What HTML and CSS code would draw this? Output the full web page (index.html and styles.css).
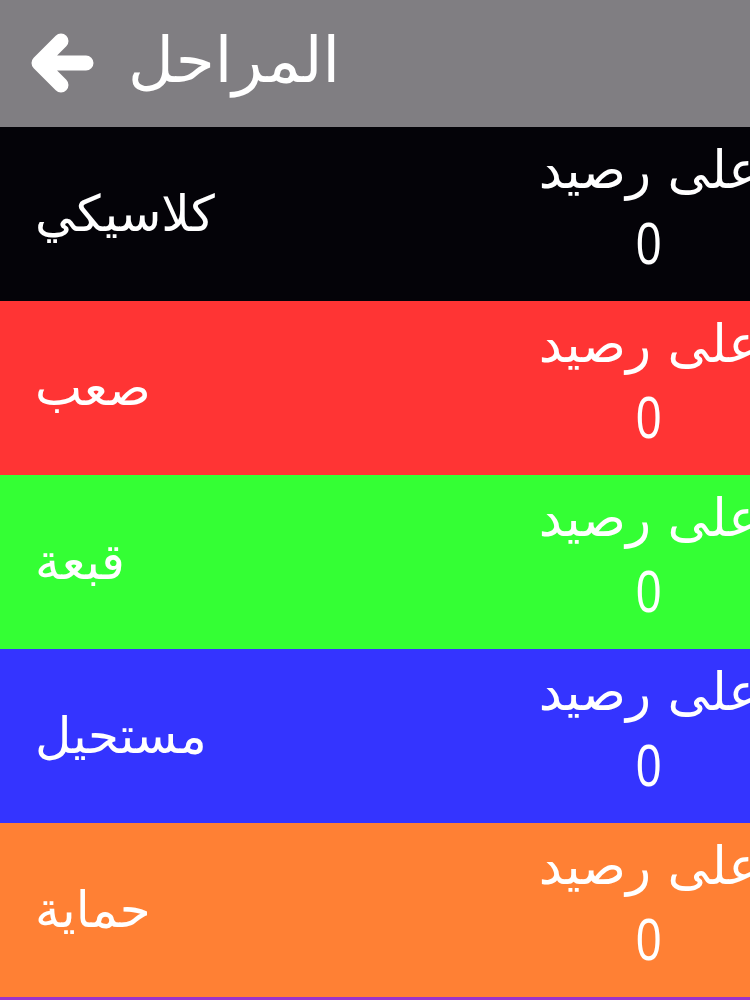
FILE: index.html
```html
<!DOCTYPE html>
<html lang="ar">
<head>
<meta charset="utf-8">
<title>المراحل</title>
<link rel="stylesheet" href="styles.css">
</head>
<body>
<header class="topbar">
  <svg class="back" width="66" height="66" viewBox="0 0 66 66" aria-hidden="true">
    <path d="M9 32 L56 32 M9 32 L31 10 M9 32 L31 54" fill="none" stroke="#fff" stroke-width="15" stroke-linecap="round" stroke-linejoin="round"/>
  </svg>
  <h1 class="title" dir="rtl">المراحل</h1>
</header>
<main class="levels">
  <div class="level level-black">
    <span class="name" dir="rtl">كلاسيكي</span>
    <div class="balance"><span class="balance-label" dir="rtl">على رصيد</span><span class="balance-value">0</span></div>
  </div>
  <div class="level level-red">
    <span class="name" dir="rtl">صعب</span>
    <div class="balance"><span class="balance-label" dir="rtl">على رصيد</span><span class="balance-value">0</span></div>
  </div>
  <div class="level level-green">
    <span class="name" dir="rtl">قبعة</span>
    <div class="balance"><span class="balance-label" dir="rtl">على رصيد</span><span class="balance-value">0</span></div>
  </div>
  <div class="level level-blue">
    <span class="name" dir="rtl">مستحيل</span>
    <div class="balance"><span class="balance-label" dir="rtl">على رصيد</span><span class="balance-value">0</span></div>
  </div>
  <div class="level level-orange">
    <span class="name" dir="rtl">حماية</span>
    <div class="balance"><span class="balance-label" dir="rtl">على رصيد</span><span class="balance-value">0</span></div>
  </div>
  <div class="level level-purple"></div>
</main>
</body>
</html>
```
FILE: styles.css
```css
html, body {
  margin: 0;
  padding: 0;
  background: #9a33cc;
  font-family: "DejaVu Sans", sans-serif;
  color: #fff;
  overflow: hidden;
}
.topbar {
  height: 127px;
  background: #807e82;
  display: flex;
  align-items: center;
  padding-left: 30px;
  gap: 32px;
  box-sizing: border-box;
}
.back {
  display: block;
  flex: none;
}
.title {
  margin: 0 0 6px;
  font-weight: normal;
  font-size: 63px;
  line-height: 1;
  color: #fff;
}
.levels {
  display: flex;
  flex-direction: column;
}
.level {
  height: 174px;
  display: flex;
  align-items: center;
  justify-content: space-between;
  overflow: hidden;
  box-sizing: border-box;
}
.name {
  padding-left: 35px;
  font-size: 50px;
  line-height: 1;
}
.balance {
  width: 202px;
  flex: none;
  display: flex;
  flex-direction: column;
  align-items: center;
  gap: 15px;
  margin-top: -12px;
}
.balance-label {
  white-space: nowrap;
  font-size: 52px;
  line-height: 1.1;
}
.balance-value {
  font-family: "Liberation Sans", sans-serif;
  font-size: 60px;
  line-height: 1;
  transform: scaleX(0.76);
}
.level-black { background: #040308; }
.level-red { background: #ff3434; }
.level-green { background: #34ff34; }
.level-blue { background: #3434ff; }
.level-orange { background: #ff8034; }
.level-purple { height: 10px; background: #9a33cc; }
```
